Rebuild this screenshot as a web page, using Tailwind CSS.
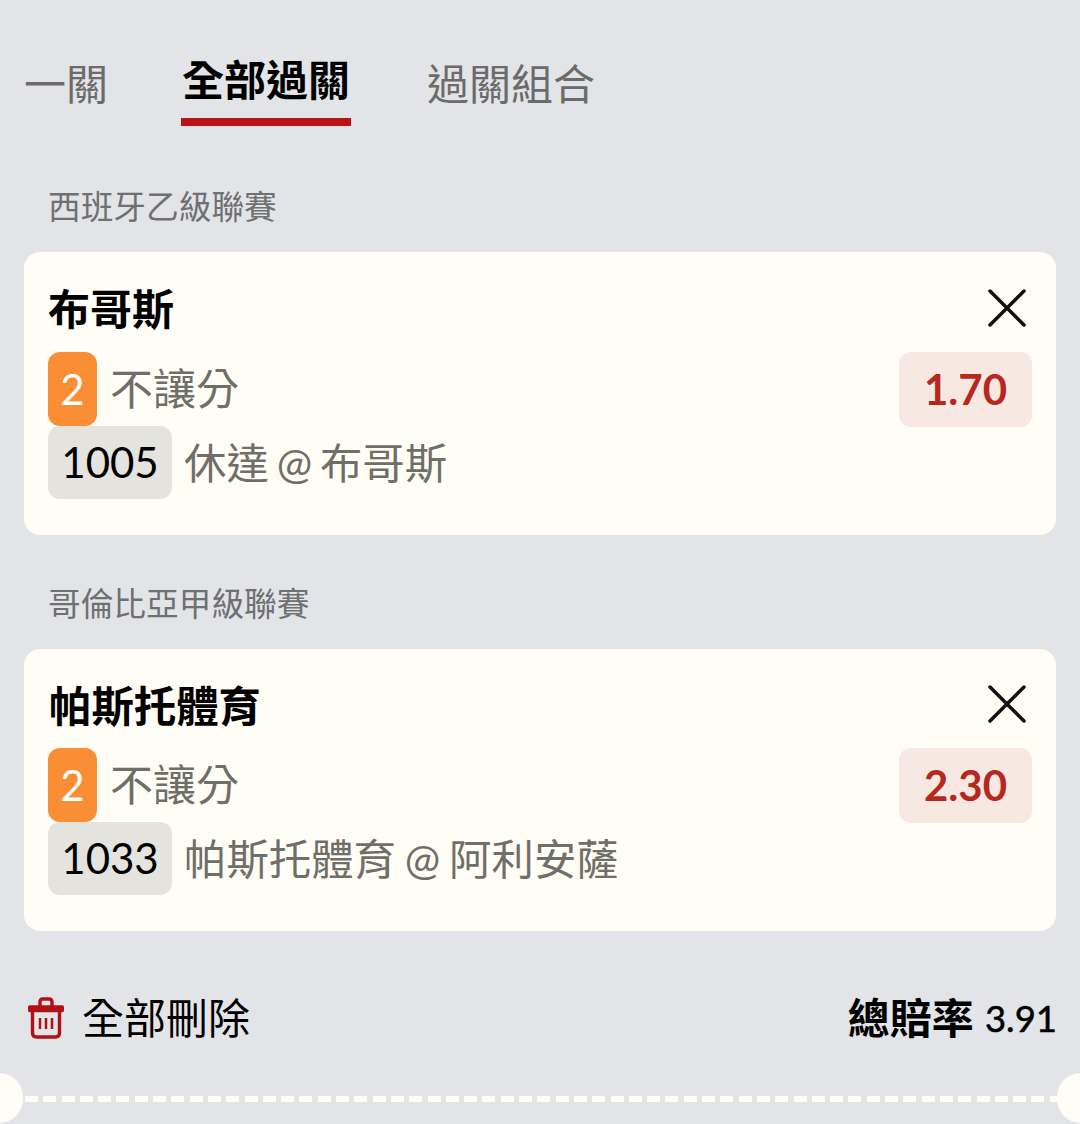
<!DOCTYPE html>
<html lang="zh-Hant">
<head>
    <meta charset="UTF-8">
    <title>全部過關</title>
    <script src="https://cdn.jsdelivr.net/npm/@tailwindcss/browser@4"></script>
</head>
<body class="bg-[#e3e4e7]">
    <div class="relative w-[1080px] h-[1124px] overflow-hidden font-['Lato','Noto_Sans_CJK_TC',sans-serif]">
        <!-- Tabs -->
        <div class="flex items-start h-[126px] pl-6 text-[42px] leading-[50px] text-[#6b6b6b]">
            <div class="w-[157px] pt-[59px]">一關</div>
            <div class="w-[170px] h-[126px] pt-[55px] text-center font-bold text-black border-b-8 border-[#b91217]">全部過關</div>
            <div class="pl-[76px] pt-[59px]">過關組合</div>
        </div>

        <!-- Bet 1 -->
        <div class="pl-[48px] pt-[61px] h-[126px] text-[32.7px] leading-[40px] text-[#6f7072]">西班牙乙級聯賽</div>
        <div class="mx-6 h-[283px] rounded-2xl bg-[#fffdf5] pl-6 pr-6">
            <div class="flex items-center justify-between h-[100px]">
                <div class="text-[42px] leading-[50px] font-bold text-black pt-[14px]">布哥斯</div>
                <svg class="mr-[5px] mt-[11px]" width="40" height="40" viewBox="0 0 40 40" fill="none" stroke="#111" stroke-width="3.5" stroke-linecap="round"><path d="M3 3 L37 37 M37 3 L3 37"/></svg>
            </div>
            <div class="flex items-start justify-between h-[74px]">
                <div class="flex items-center">
                    <div class="w-[49px] h-[74px] rounded-xl bg-[#f98e35] text-white text-[42px] flex items-center justify-center">2</div>
                    <div class="ml-[13px] text-[43px] leading-[50px] text-[#6f6f6a]">不讓分</div>
                </div>
                <div class="w-[133px] h-[75px] rounded-xl bg-[#f7e8e2] text-[#b5271f] text-[42px] font-bold flex items-center justify-center">1.70</div>
            </div>
            <div class="flex items-center">
                <div class="w-[124px] h-[73px] rounded-xl bg-[#e5e3de] text-black text-[42px] flex items-center justify-center">1005</div>
                <div class="ml-3 text-[42.4px] leading-[50px] [word-spacing:-3px] text-[#6f6f6a]">休達 @ 布哥斯</div>
            </div>
        </div>

        <!-- Bet 2 -->
        <div class="pl-[48px] pt-[49px] h-[114px] text-[32.7px] leading-[40px] text-[#6f7072]">哥倫比亞甲級聯賽</div>
        <div class="mx-6 h-[282px] rounded-2xl bg-[#fffdf5] pl-6 pr-6">
            <div class="flex items-center justify-between h-[99px]">
                <div class="text-[42.4px] leading-[50px] font-bold text-black pt-[14px] pl-px">帕斯托體育</div>
                <svg class="mr-[5px] mt-[11px]" width="40" height="40" viewBox="0 0 40 40" fill="none" stroke="#111" stroke-width="3.5" stroke-linecap="round"><path d="M3 3 L37 37 M37 3 L3 37"/></svg>
            </div>
            <div class="flex items-start justify-between h-[74px]">
                <div class="flex items-center">
                    <div class="w-[49px] h-[74px] rounded-xl bg-[#f98e35] text-white text-[42px] flex items-center justify-center">2</div>
                    <div class="ml-[13px] text-[43px] leading-[50px] text-[#6f6f6a]">不讓分</div>
                </div>
                <div class="w-[133px] h-[75px] rounded-xl bg-[#f7e8e2] text-[#b5271f] text-[42px] font-bold flex items-center justify-center">2.30</div>
            </div>
            <div class="flex items-center">
                <div class="w-[124px] h-[73px] rounded-xl bg-[#e5e3de] text-black text-[42px] flex items-center justify-center">1033</div>
                <div class="ml-3 text-[42.4px] leading-[50px] [word-spacing:-2px] text-[#6f6f6a]">帕斯托體育 @ 阿利安薩</div>
            </div>
        </div>

        <!-- Footer -->
        <div class="flex items-center justify-between pl-[28px] pr-[23px] mt-[62px] h-[50px]">
            <div class="flex items-center">
                <svg width="36" height="42" viewBox="0 0 36 42" fill="none" stroke="#b01116" stroke-width="3.4" stroke-linejoin="round" stroke-linecap="round">
                    <path d="M1.7 10 H34.3 V13.5 H1.7 Z"/>
                    <path d="M12 9 V5 Q12 2 15 2 H21 Q24 2 24 5 V9"/>
                    <path d="M4.5 13.5 V36 Q4.5 40 8.5 40 H27.5 Q31.5 40 31.5 36 V13.5"/>
                    <path d="M12 21 V32 M18 21 V32 M24 21 V32" stroke-width="2.5" stroke-linecap="butt"/>
                </svg>
                <div class="ml-[18px] text-[42px] leading-[50px] text-black">全部刪除</div>
            </div>
            <div class="flex items-center text-black">
                <span class="text-[42px] leading-[50px] font-bold">總賠率</span>
                <span class="ml-[11px] text-[36.5px] leading-[50px] [-webkit-text-stroke:0.5px_black]">3.91</span>
            </div>
        </div>

        <!-- Ticket divider -->
        <div class="mt-[53px] ml-[25px] mr-[22px] h-[6px] bg-[repeating-linear-gradient(90deg,#fffdf5_0_13px,transparent_13px_18.3px)]"></div>
        <div class="absolute left-[-25px] top-[1073px] w-[48px] h-[50px] rounded-full bg-[#fffdf5]"></div>
        <div class="absolute right-[-25px] top-[1073px] w-[48px] h-[50px] rounded-full bg-[#fffdf5]"></div>
    </div>
</body>
</html>
